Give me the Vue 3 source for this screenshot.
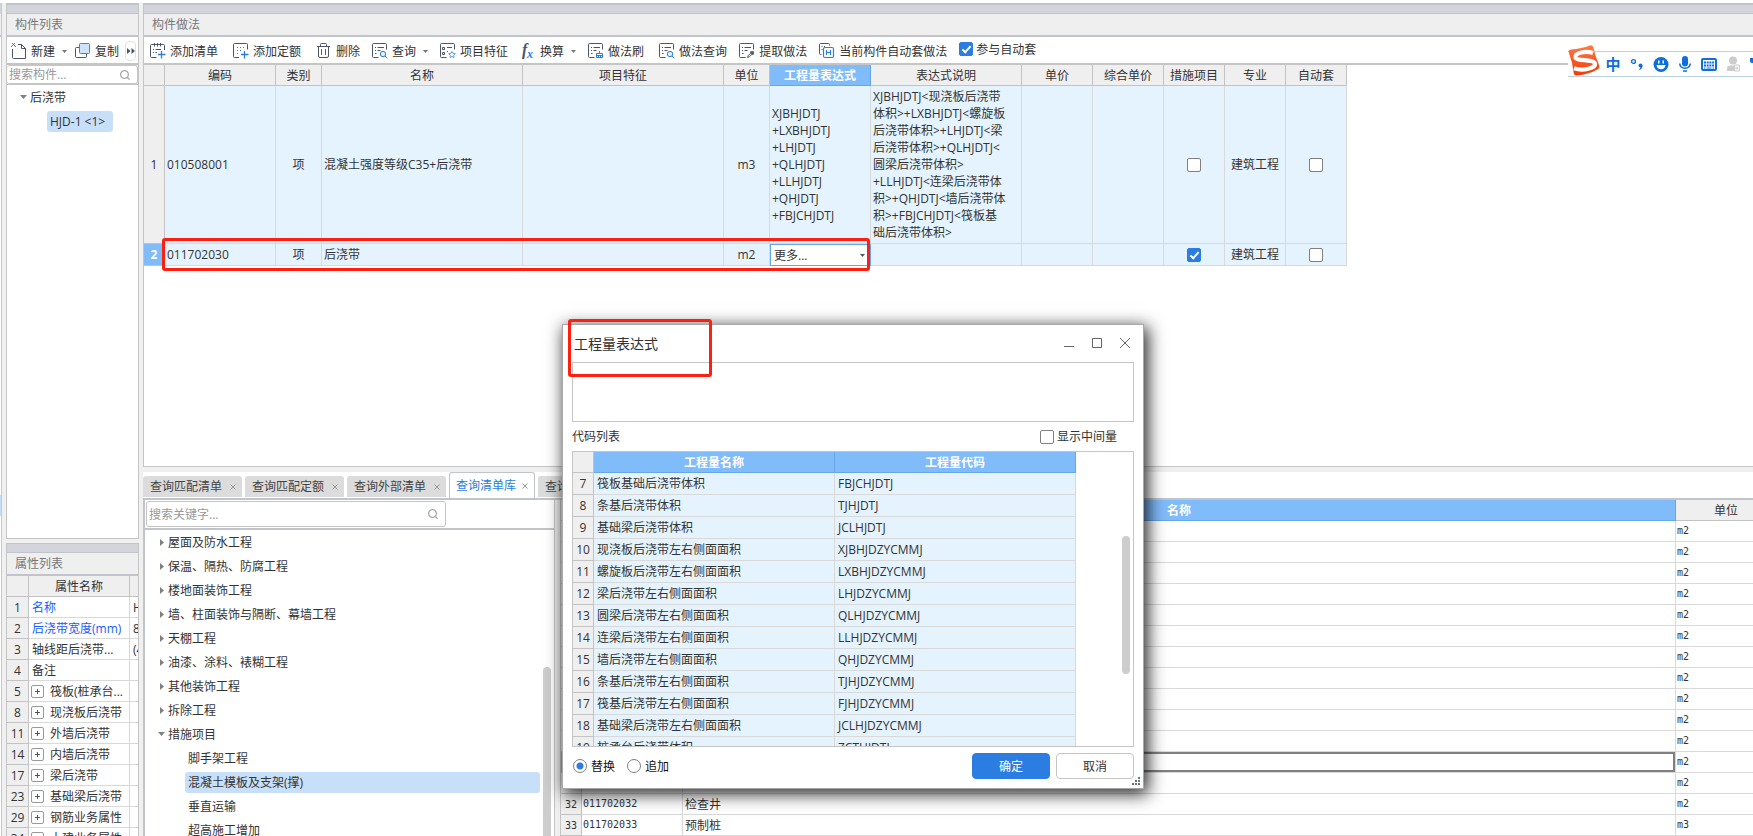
<script setup>
import { ref } from 'vue'

const tools = [
  { label: '添加清单', icon: 'list-add' },
  { label: '添加定额', icon: 'quota-add' },
  { label: '删除', icon: 'trash', tight: true },
  { label: '查询', icon: 'search', caret: true, tight: true },
  { label: '项目特征', icon: 'feature', tight: true },
  { label: '换算', icon: 'fx', caret: true, tight: true },
  { label: '做法刷', icon: 'brush' },
  { label: '做法查询', icon: 'search', tight: true },
  { label: '提取做法', icon: 'extract', tight: true },
  { label: '当前构件自动套做法', icon: 'auto', tight: true },
]

const columns = ['编码', '类别', '名称', '项目特征', '单位', '工程量表达式', '表达式说明', '单价', '综合单价', '措施项目', '专业', '自动套']

const expression = 'XJBHJDTJ\n+LXBHJDTJ\n+LHJDTJ\n+QLHJDTJ\n+LLHJDTJ\n+QHJDTJ\n+FBJCHJDTJ'
const description = 'XJBHJDTJ<现浇板后浇带\n体积>+LXBHJDTJ<螺旋板\n后浇带体积>+LHJDTJ<梁\n后浇带体积>+QLHJDTJ<\n圆梁后浇带体积>\n+LLHJDTJ<连梁后浇带体\n积>+QHJDTJ<墙后浇带体\n积>+FBJCHJDTJ<筏板基\n础后浇带体积>'

const properties = [
  { no: 1, name: '名称', value: 'HJD-1', key: true },
  { no: 2, name: '后浇带宽度(mm)', value: '800', key: true },
  { no: 3, name: '轴线距后浇带...', value: '(400)' },
  { no: 4, name: '备注', value: '' },
  { no: 5, name: '筏板(桩承台...', group: true },
  { no: 8, name: '现浇板后浇带', group: true },
  { no: 11, name: '外墙后浇带', group: true },
  { no: 14, name: '内墙后浇带', group: true },
  { no: 17, name: '梁后浇带', group: true },
  { no: 23, name: '基础梁后浇带', group: true },
  { no: 29, name: '钢筋业务属性', group: true },
  { no: 34, name: '土建业务属性', group: true },
]

const tabs = ['查询匹配清单', '查询匹配定额', '查询外部清单', '查询清单库', '查询定额库']
const activeTab = ref('查询清单库')

const chapters = ['屋面及防水工程', '保温、隔热、防腐工程', '楼地面装饰工程', '墙、柱面装饰与隔断、幕墙工程', '天棚工程', '油漆、涂料、裱糊工程', '其他装饰工程', '拆除工程']
const measures = ['脚手架工程', '混凝土模板及支架(撑)', '垂直运输', '超高施工增加']
const activeMeasure = ref('混凝土模板及支架(撑)')

const named = { 32: ['011702032', '检查井'], 33: ['011702033', '预制桩'] }
const items = Array.from({ length: 15 }, (_, i) => {
  const no = 19 + i
  const [code, name] = named[no] || ['', '']
  return { no, code, name, unit: no === 33 ? 'm3' : 'm2' }
})

const codes = [
  [7, '筏板基础后浇带体积', 'FBJCHJDTJ'],
  [8, '条基后浇带体积', 'TJHJDTJ'],
  [9, '基础梁后浇带体积', 'JCLHJDTJ'],
  [10, '现浇板后浇带左右侧面面积', 'XJBHJDZYCMMJ'],
  [11, '螺旋板后浇带左右侧面面积', 'LXBHJDZYCMMJ'],
  [12, '梁后浇带左右侧面面积', 'LHJDZYCMMJ'],
  [13, '圆梁后浇带左右侧面面积', 'QLHJDZYCMMJ'],
  [14, '连梁后浇带左右侧面面积', 'LLHJDZYCMMJ'],
  [15, '墙后浇带左右侧面面积', 'QHJDZYCMMJ'],
  [16, '条基后浇带左右侧面面积', 'TJHJDZYCMMJ'],
  [17, '筏基后浇带左右侧面面积', 'FJHJDZYCMMJ'],
  [18, '基础梁后浇带左右侧面面积', 'JCLHJDZYCMMJ'],
  [19, '桩承台后浇带体积', 'ZCTHJDTJ'],
]

const joinAuto = ref(true)
const showMiddle = ref(false)
const mode = ref('replace')
const formula = ref('')
const more = ref('more')
</script>

<template>
  <div class="app">
    <div class="edge">
      <div class="edge-top"></div>
      <div class="edge-mark"></div>
    </div>

    <aside class="side">
      <section class="panel list-panel">
        <div class="band"></div>
        <h2 class="panel-title">构件列表</h2>
        <div class="side-tools">
          <button class="tool">
            <svg class="ico" viewBox="0 0 16 16">
              <path d="M1.500 6v8.500a1 1 0 0 0 1 1h12v-10l-4-4H7" fill="none" stroke="#4b5668" />
              <path d="M10.500 1v4.500h4.500" fill="none" stroke="#4b5668" />
              <path d="M0 0h1v1h1v1H1v1H0v1h1V3h1V2h1v1h1v1h1V3H4V2H3V1h1V0H3v1H2V0z" fill="#2b7de1" />
            </svg>
            <span>新建</span>
            <svg class="caret" viewBox="0 0 5 3"><path d="M0 0h5L2.500 3z" /></svg>
          </button>
          <button class="tool">
            <svg class="ico" viewBox="0 0 16 16">
              <path d="M4 4.500H1.500a1 1 0 0 0-1 1v8a1 1 0 0 0 1 1h9a1 1 0 0 0 1-1V11" fill="none" stroke="#4b5668" />
              <rect x="4.500" y=".5" width="10" height="10" rx="1" fill="#cde2fb" stroke="#3a86e0" />
            </svg>
            <span>复制</span>
          </button>
          <button class="overflow" aria-label="更多工具">
            <svg viewBox="0 0 8 6"><path d="M0 0l3.500 3L0 6zM4.500 0L8 3 4.500 6z" fill="#4b5668" /></svg>
          </button>
        </div>
        <div class="side-search">
          <div class="search-box">
            <input type="text" placeholder="搜索构件..." aria-label="搜索构件" />
            <svg class="lens" viewBox="0 0 10 10"><circle cx="4.500" cy="4.500" r="3.900" /><path d="M7.200 7.200L9.500 9.700" /></svg>
          </div>
        </div>
        <ul class="tree">
          <li class="node"><svg class="twist down" viewBox="0 0 7 4"><path d="M0 0h7L3.500 4z" /></svg><span>后浇带</span></li>
          <li class="node leaf"><span class="picked">HJD-1 &lt;1&gt;</span></li>
        </ul>
      </section>

      <section class="panel prop-panel">
        <div class="band"></div>
        <h2 class="panel-title">属性列表</h2>
        <div class="prop-scroll">
          <table class="grid prop-grid">
            <colgroup><col class="w-no" /><col class="w-prop" /><col class="w-value" /></colgroup>
            <thead><tr><th></th><th>属性名称</th><th></th></tr></thead>
            <tbody>
              <tr v-for="p in properties" :key="p.no">
                <th>{{ p.no }}</th>
                <td :class="{ key: p.key }">
                  <span class="prop-name">
                    <button v-if="p.group" class="plus" :aria-label="'展开' + p.name">
                      <svg viewBox="0 0 7 7"><path d="M3.500 1v5M1 3.500h5" stroke="#4b5668" /></svg>
                    </button>
                    {{ p.name }}
                  </span>
                </td>
                <td>{{ p.value }}</td>
              </tr>
            </tbody>
          </table>
        </div>
      </section>
    </aside>

    <main class="main">
      <section class="panel method-panel">
        <div class="band"></div>
        <h2 class="panel-title">构件做法</h2>
        <div class="toolbar">
          <button v-for="t in tools" :key="t.label" class="tool" :class="{ tight: t.tight }">
            <svg class="ico" viewBox="0 0 16 16" fill="none" stroke="#4b5668">
              <template v-if="t.icon === 'list-add'">
                <path d="M6.500 14.500H1.500a1 1 0 0 1-1-1v-11a1 1 0 0 1 1-1h12a1 1 0 0 1 1 1V7" />
                <path d="M4.500 0v3.500M7.500 0v3.500M10.500 0v3.500M3 6.500h1M5.500 6.500h5.500M3 9.500h1M5.500 9.500H7" />
                <path d="M11.500 8v7.500M8 11.500h7.500" stroke="#2b7de1" stroke-width="1.300" />
              </template>
              <template v-else-if="t.icon === 'quota-add'">
                <path d="M6 14.500H1.500a1 1 0 0 1-1-1v-12a1 1 0 0 1 1-1h12a1 1 0 0 1 1 1v5" />
                <path d="M4 4.500h8M4 7.500h6M4 10.500h3" stroke="#2b7de1" stroke-dasharray="1 2" />
                <path d="M11.500 8v7.500M8 11.500h7.500" stroke="#2b7de1" stroke-width="1.300" />
              </template>
              <template v-else-if="t.icon === 'trash'">
                <path d="M1 3.500h13M4.500 3.500v-2a1 1 0 0 1 1-1h4a1 1 0 0 1 1 1v2M2.500 3.500v9.500a1.500 1.500 0 0 0 1.500 1.500h7a1.500 1.500 0 0 0 1.500-1.500v-9.500" />
                <path d="M5.500 6v6M9.500 6v6" stroke="#e5252a" />
              </template>
              <template v-else-if="t.icon === 'fx'">
                <text x="2" y="12" class="fx-f">f</text>
                <text x="7" y="15" class="fx-x">x</text>
              </template>
              <template v-else-if="t.icon === 'auto'">
                <path d="M2.500 11.500H1.500a1 1 0 0 1-1-1v-9a1 1 0 0 1 1-1h8a1 1 0 0 1 1 1V2.500M2.500 3.500h1M2.500 6.500h1M5 3.500h1" />
                <rect x="4.500" y="4.500" width="10" height="10" rx="1.500" stroke="#2b7de1" stroke-width="1.200" />
                <path d="M7.500 7v5M11.500 7v5M7.500 9.500h4" stroke="#2b7de1" stroke-width="1.200" />
              </template>
              <template v-else>
                <path d="M6.500 14.500H1.500a1 1 0 0 1-1-1v-12a1 1 0 0 1 1-1h12a1 1 0 0 1 1 1v5" />
                <template v-if="t.icon === 'feature'">
                  <path d="M2.500 4.500h2v2h-2zM2.500 9.500h2v2h-2zM7 4.500h5M7 8.500h1" />
                  <path d="M12 8.300l1 2.100 2.300.3-1.700 1.600.4 2.300-2-1.100-2 1.100.4-2.300-1.700-1.600 2.300-.3z" stroke="#5b9cec" />
                </template>
                <template v-else>
                  <path d="M3 4.500h1M5.500 4.500H12M3 7.500h1M5.500 7.500H8.500M3 10.500h1.500" />
                  <g v-if="t.icon === 'search'" stroke="#2b7de1"><circle cx="11" cy="11" r="2.700" fill="#e3effc" /><path d="M13 13l2.300 2.300" /></g>
                  <g v-else-if="t.icon === 'brush'" stroke="#2b7de1"><path d="M11.500 8v2.500M8.500 14.500v-4h6v4zM8.500 12.500h6M10.500 12.500v2M12.500 12.500v2" /></g>
                  <g v-else><path d="M8.500 14.500l.8-2 3-3 1.200 1.200-3 3z" /><path d="M11.500 8.500l3 3M13 10l1.700-1.700" stroke-width="1.800" /></g>
                </template>
              </template>
            </svg>
            <span>{{ t.label }}</span>
            <svg v-if="t.caret" class="caret" viewBox="0 0 5 3"><path d="M0 0h5L2.500 3z" /></svg>
          </button>
          <label class="join"><input v-model="joinAuto" type="checkbox" class="check" /><span>参与自动套</span></label>
        </div>

        <div class="method-body">
          <table class="grid method-grid">
            <colgroup>
              <col class="w-no" /><col class="w-code" /><col class="w-kind" /><col class="w-name" /><col class="w-name" /><col class="w-kind" />
              <col class="w-expr" /><col class="w-desc" /><col class="w-price" /><col class="w-price" /><col class="w-flag" /><col class="w-flag" /><col class="w-flag" />
            </colgroup>
            <thead>
              <tr><th></th><th v-for="c in columns" :key="c" :class="{ hot: c === '工程量表达式' }">{{ c }}</th></tr>
            </thead>
            <tbody>
              <tr class="tall">
                <th>1</th>
                <td>010508001</td><td class="mid">项</td><td>混凝土强度等级C35+后浇带</td><td></td><td class="mid">m3</td>
                <td class="lines">{{ expression }}</td><td class="lines">{{ description }}</td><td></td><td></td>
                <td class="mid"><input type="checkbox" class="check" aria-label="措施项目" /></td>
                <td class="mid">建筑工程</td>
                <td class="mid"><input type="checkbox" class="check" aria-label="自动套" /></td>
              </tr>
              <tr class="short">
                <th class="current">2</th>
                <td>011702030</td><td class="mid">项</td><td>后浇带</td><td></td><td class="mid">m2</td>
                <td class="editing">
                  <div class="pick">
                    <select v-model="more" aria-label="工程量表达式"><option value="more">更多...</option></select>
                    <svg class="caret" viewBox="0 0 5 3"><path d="M0 0h5L2.500 3z" /></svg>
                  </div>
                </td>
                <td></td><td></td><td></td>
                <td class="mid"><input type="checkbox" class="check" checked aria-label="措施项目" /></td>
                <td class="mid">建筑工程</td>
                <td class="mid"><input type="checkbox" class="check" aria-label="自动套" /></td>
              </tr>
            </tbody>
          </table>
        </div>
      </section>

      <section class="query">
        <div class="tabs" role="tablist">
          <button v-for="t in tabs" :key="t" class="tab" :class="{ active: t === activeTab }" role="tab" :aria-selected="t === activeTab" @click="activeTab = t">
            <span>{{ t }}</span>
            <svg viewBox="0 0 6 6"><path d="M.5.5l5 5M5.500.5l-5 5" /></svg>
          </button>
        </div>
        <div class="query-body">
          <div class="library">
            <div class="library-search">
              <div class="search-box">
                <input type="text" placeholder="搜索关键字..." aria-label="搜索关键字" />
                <svg class="lens" viewBox="0 0 10 10"><circle cx="4.500" cy="4.500" r="3.900" /><path d="M7.200 7.200L9.500 9.700" /></svg>
              </div>
            </div>
            <div class="library-list">
              <ul class="tree">
                <li v-for="c in chapters" :key="c" class="node"><svg class="twist" viewBox="0 0 4 7"><path d="M0 0l4 3.500L0 7z" /></svg><span>{{ c }}</span></li>
                <li class="node"><svg class="twist down" viewBox="0 0 7 4"><path d="M0 0h7L3.500 4z" /></svg><span>措施项目</span></li>
                <li v-for="m in measures" :key="m" class="node leaf"><span :class="{ picked: m === activeMeasure }">{{ m }}</span></li>
              </ul>
              <div class="track"><div class="thumb"></div></div>
            </div>
          </div>
          <div class="results">
            <table class="grid result-grid">
              <colgroup><col class="w-no" /><col class="w-item" /><col /><col class="w-item" /></colgroup>
              <thead><tr><th></th><th aria-label="编码"></th><th class="hot">名称</th><th>单位</th></tr></thead>
              <tbody>
                <tr v-for="r in items" :key="r.no">
                  <th class="mono" :class="{ current: r.no === 30 }">{{ r.no }}</th>
                  <td class="mono">{{ r.code }}</td>
                  <td :class="{ focus: r.no === 30 }">{{ r.name }}</td>
                  <td class="mono">{{ r.unit }}</td>
                </tr>
              </tbody>
            </table>
          </div>
        </div>
      </section>
    </main>

    <div class="mark mark-row"></div>

    <div class="ime">
      <svg class="ime-logo" viewBox="0 0 32 32">
        <defs><linearGradient id="ime-fill" x1="0" y1="0" x2="0" y2="1"><stop offset="0" stop-color="#ff7a45" /><stop offset="1" stop-color="#f03c06" /></linearGradient></defs>
        <path d="M3 4.500Q14 3.500 22 .5q2.500-.8 3.200 1.500 2 9 6 18.500.8 2.500-1.400 3.700-8.500 5-21 6.300-2.500.2-3-2Q4.500 17 .8 7.500-.1 5 3 4.500z" fill="url(#ime-fill)" />
        <path d="M25 8C18 5.500 6.500 7.500 7.500 12.500c1 4 18 1 19.500 6 1 4.500-12 8-21 4.800" fill="none" stroke="#fff" stroke-width="4.200" />
      </svg>
      <button class="ime-key ime-text">中</button>
      <button class="ime-key" aria-label="标点"><svg viewBox="0 0 16 16"><circle cx="4.500" cy="5.500" r="1.900" fill="none" stroke="#0d6fdc" stroke-width="1.400" /><circle cx="11.500" cy="9.500" r="2" fill="#0d6fdc" /><path d="M13.500 9.500q0 3-3 4.500l-.3-.8q1.400-1 1.300-2.700z" fill="#0d6fdc" /></svg></button>
      <button class="ime-key" aria-label="表情"><svg viewBox="0 0 16 16"><circle cx="8" cy="8.500" r="7.500" fill="#0d6fdc" /><path d="M5 4.500h1.500v3H5zM9.500 4.500H11v3H9.500zM3.500 9h9q-.5 4.200-4.500 4.200T3.500 9z" fill="#fff" /></svg></button>
      <button class="ime-key" aria-label="语音"><svg viewBox="0 0 16 16"><rect x="5" y="0" width="6" height="10.500" rx="3" fill="#0d6fdc" /><path d="M2.700 7.500q.5 4.700 5.300 4.700t5.300-4.700M6 15h4" fill="none" stroke="#0d6fdc" stroke-width="1.600" /></svg></button>
      <button class="ime-key" aria-label="键盘"><svg viewBox="0 0 16 16"><rect x="1" y="3" width="14" height="11" rx="1.200" fill="none" stroke="#0d6fdc" stroke-width="2" /><path d="M3 6.500h10M3 9.500h10" stroke="#0d6fdc" stroke-width="2" stroke-dasharray="2 .7" /><path d="M3 12h1.500M5.500 12h5M11.500 12H13" stroke="#0d6fdc" stroke-width="1.200" /></svg></button>
      <button class="ime-key" aria-label="用户"><svg viewBox="0 0 16 16"><circle cx="8" cy="4.500" r="4" fill="#ccc" /><path d="M2 15v-2.500Q2 9.500 5 9.500h6v5.500z" fill="#ccc" /><path d="M9.500 9h5v6h-5z" fill="#fff" stroke="#ccc" /><path d="M11 10.500v2.500h1.500v-2.500" fill="none" stroke="#ccc" /></svg></button>
      <button class="ime-key" aria-label="工具箱"><svg viewBox="0 0 16 16"><path d="M1 2h6v5H3q-2 0-2-2z" fill="#0d6fdc" /></svg></button>
    </div>

    <section class="dialog" role="dialog" aria-labelledby="dialog-title">
      <header class="dialog-head">
        <h1 id="dialog-title">工程量表达式</h1>
        <div class="window-keys">
          <button aria-label="最小化"><svg viewBox="0 0 12 12"><path d="M1 9.500h10" /></svg></button>
          <button aria-label="最大化"><svg viewBox="0 0 12 12"><path d="M1.500 1.500h9v9h-9z" /></svg></button>
          <button aria-label="关闭"><svg viewBox="0 0 12 12"><path d="M1 1l10 10M11 1L1 11" /></svg></button>
        </div>
      </header>
      <textarea v-model="formula" class="formula" aria-label="工程量表达式"></textarea>
      <div class="dialog-row">
        <span>代码列表</span>
        <label class="option"><input v-model="showMiddle" type="checkbox" class="check" /><span>显示中间量</span></label>
      </div>
      <div class="code-box">
        <table class="grid code-grid">
          <colgroup><col class="w-no" /><col class="w-half" /><col class="w-half" /></colgroup>
          <thead><tr><th></th><th class="hot">工程量名称</th><th class="hot">工程量代码</th></tr></thead>
          <tbody>
            <tr v-for="[no, name, code] in codes" :key="no"><th>{{ no }}</th><td>{{ name }}</td><td>{{ code }}</td></tr>
          </tbody>
        </table>
        <div class="code-track"><div class="code-thumb"></div></div>
      </div>
      <footer class="dialog-foot">
        <label class="option"><input v-model="mode" type="radio" class="radio" value="replace" name="mode" /><span>替换</span></label>
        <label class="option"><input v-model="mode" type="radio" class="radio" value="append" name="mode" /><span>追加</span></label>
        <button class="btn primary">确定</button>
        <button class="btn">取消</button>
      </footer>
      <svg class="grip" viewBox="0 0 8 8"><path d="M6 0h2v2H6zM6 3h2v2H6zM3 3h2v2H3zM6 6h2v2H6zM3 6h2v2H3zM0 6h2v2H0z" fill="#6d7480" /></svg>
      <div class="mark mark-title"></div>
    </section>
  </div>
</template>

<style>
html, body { margin: 0; overflow: hidden; background: #fff; }
</style>

<style scoped>
.app, .app * { box-sizing: border-box; }
.app {
  position: relative;
  display: flex;
  height: 100vh;
  padding-top: 3px;
  overflow: hidden;
  color: #333;
  background: #fff;
  font-family: "Open Sans", "Noto Sans CJK SC", sans-serif;
  font-size: 12px;
  line-height: 17px;
}
button, input, select, textarea { font: inherit; color: inherit; }
button { padding: 0; border: 0; background: none; }
ul, h1, h2 { margin: 0; padding: 0; font-size: 12px; font-weight: 400; list-style: none; }
svg { display: block; flex: none; }

.edge { width: 2px; background: #fff; border-right: 1px solid #c8c8c8; }
.edge-top { height: 34px; background: #efefef; border-top: 11px solid #d4d5dc; border-bottom: 2px solid #c1c5cb; }
.edge-mark { height: 21px; margin-top: 458px; background: #c8dffa; }

.side { display: flex; flex-direction: column; gap: 4px; width: 141px; padding: 0 4px; background: #f0f0f0; flex: none; }
.panel { display: flex; flex-direction: column; min-height: 0; background: #fff; border-left: 1px solid #c5c5c5; overflow: hidden; }
.side .panel { border-right: 1px solid #c5c5c5; }
.list-panel { flex: 1; border-bottom: 1px solid #c5c5c5; }
.prop-panel { height: 293px; flex: none; }
.prop-panel .band { height: 10px; border-top-width: 1px; }
.band { height: 11px; flex: none; background: #d4d5dc; border-top: 2px solid #c1c5cb; border-bottom: 1px solid #c1c5cb; }
.panel-title { height: 23px; flex: none; padding-left: 8px; line-height: 22px; color: #777; background: #efefef; border-bottom: 2px solid #c1c5cb; }

.side-tools, .toolbar { display: flex; align-items: center; height: 28px; flex: none; padding-top: 2px; border-bottom: 2px solid #c5c5c5; }
.side-tools { padding-left: 4px; gap: 8px; }
.toolbar { padding-left: 6px; }
.tool { display: flex; align-items: center; gap: 4px; white-space: nowrap; }
.toolbar .tool { margin-right: 15px; }
.toolbar .tool.tight { margin-right: 12px; }
.ico { width: 16px; height: 16px; }
.caret { width: 5px; height: 3px; margin-left: 3px; fill: #777; }
.fx-f { font: italic 700 16px "Liberation Serif", serif; fill: #4b5668; stroke: none; }
.fx-x { font: italic 700 12px "Liberation Serif", serif; fill: #2b7de1; stroke: none; }
.overflow { display: flex; align-items: center; justify-content: center; width: 11px; height: 20px; margin-left: -2px; border: 1px solid #e2e2e2; border-radius: 4px; }
.overflow svg { width: 8px; height: 6px; }
.join { display: flex; align-items: center; gap: 3px; padding-bottom: 4px; white-space: nowrap; }

.search-box { display: flex; align-items: center; border: 1px solid #c5c5c5; border-radius: 3px; background: #fff; }
.search-box input { flex: 1; min-width: 0; height: 17px; padding: 0 0 0 2px; border: 0; outline: 0; background: none; }
.search-box input::placeholder { color: #999; opacity: 1; }
.lens { width: 10px; height: 10px; margin-right: 7px; fill: none; stroke: #aaa; stroke-width: 1.3; }
.side-search { flex: none; border-bottom: 1px solid #c5c5c5; }
.side-search .search-box { height: 19px; border-left: 0; }

.node { display: flex; align-items: center; height: 24px; }
.twist { width: 4px; height: 7px; fill: #808080; }
.twist.down { width: 7px; height: 4px; }
.list-panel .node { padding-left: 13px; gap: 3px; }
.list-panel .leaf { padding-left: 40px; }
.picked { padding: 2px 3px; background: #c8dffa; border-radius: 3px; }
.list-panel .picked { padding: 2px 8px 2px 3px; }

.grid { table-layout: fixed; border-collapse: separate; border-spacing: 0; width: 100%; }
.grid th, .grid td { height: 21px; padding: 0 2px; border-right: 1px solid #d9d9d9; border-bottom: 1px solid #d9d9d9; overflow: hidden; white-space: nowrap; text-align: left; vertical-align: middle; font-weight: 400; }
.grid th { padding: 0; text-align: center; background: #efefef; border-color: #c3c3c3; }
.grid th.hot { color: #fff; font-weight: 700; background: #80bbfa; border-color: #65a7ea; }
.grid th.current { color: #fff; font-weight: 700; background: #80bbfa; }
.grid .mid { text-align: center; }
.w-no { width: 21px; }
.w-code { width: 111px; }
.w-kind { width: 46px; }
.w-name { width: 201px; }
.w-expr, .w-item { width: 101px; }
.w-desc { width: 151px; }
.w-price { width: 71px; }
.w-flag { width: 61px; }
.w-half { width: 241px; }
.w-prop { width: 101px; }
.w-value { width: 100px; }

.prop-scroll { overflow: hidden; }
.prop-grid { width: 223px; }
.prop-grid .w-no { width: 22px; }
.prop-grid td:nth-child(2) { padding-left: 3px; }
.prop-grid td:nth-child(3) { padding-left: 3px; }
.prop-name { display: flex; align-items: center; gap: 6px; }
.key { color: #1a5cff; }
.plus { display: flex; align-items: center; justify-content: center; width: 13px; height: 13px; margin-left: -1px; border: 1px solid #999; border-radius: 2px; flex: none; }
.plus svg { width: 7px; height: 7px; }

.main { display: flex; flex-direction: column; flex: 1; min-width: 0; }
.method-panel { flex: 1; border-bottom: 1px solid #c5c5c5; }
.method-body { flex: 1; min-height: 0; overflow: hidden; }
.method-grid { width: 1203px; }
.method-grid td { background: #e5f3ff; }
.method-grid .tall > * { height: 158px; }
.method-grid .short > * { height: 22px; }
.method-grid .lines { white-space: pre; }
.method-grid .editing { padding: 0; background: #fff; border-color: #65a7ea; }
.method-grid .check { display: block; margin: 0 auto; }
.pick { display: flex; align-items: center; height: 21px; padding-right: 5px; border: 1px solid #65a7ea; border-width: 1px 0 0 1px; }
.pick select { flex: 1; min-width: 0; padding: 0 0 0 3px; border: 0; outline: 0; background: none; appearance: none; }
.pick .caret { fill: #4b5668; }

.check { appearance: none; display: inline-block; width: 14px; height: 14px; margin: 0; border: 1px solid #808080; border-radius: 2px; background: #fff; vertical-align: middle; flex: none; }
.check:checked { border-color: #2b7de1; background: #2b7de1; position: relative; }
.check:checked::after { content: ""; position: absolute; left: 4px; top: 1px; width: 3px; height: 7px; border: solid #fff; border-width: 0 2px 2px 0; transform: rotate(42deg); }

.query { display: flex; flex-direction: column; height: 369px; flex: none; border-top: 5px solid #efefef; background: #fff; }
.tabs { display: flex; align-items: flex-end; gap: 3px; height: 28px; flex: none; border-bottom: 2px solid #c1c5cb; overflow: hidden; }
.tab { display: flex; align-items: center; gap: 8px; height: 21px; margin-bottom: 1px; padding: 0 6px 0 7px; background: #dcdcdc; border-radius: 3px 3px 0 0; color: #444; white-space: nowrap; flex: none; }
.tab svg { width: 6px; height: 6px; stroke: #999; }
.tab.active { height: 26px; margin-bottom: 0; gap: 6px; padding: 0 6px; color: #2b7de1; background: #fff; border: 1px solid #c1c5cb; border-bottom: 0; }
.query-body { display: flex; flex: 1; min-height: 0; }
.library { display: flex; flex-direction: column; width: 412px; flex: none; border-left: 2px solid #c1c5cb; border-right: 1px solid #c5c5c5; }
.library-search { padding: 1px; border-bottom: 2px solid #c1c5cb; flex: none; }
.library-search .search-box { width: 300px; height: 26px; }
.library-list { display: flex; flex: 1; min-height: 0; }
.library-list .tree { flex: 1; overflow: hidden; }
.library .node { padding-left: 15px; gap: 4px; }
.library .twist.down { margin: 0 -1px 0 -2px; }
.library .leaf { padding-left: 40px; }
.library .leaf span { flex: 1; padding: 2px 3px; }
.track { width: 14px; padding: 137px 3px 0; }
.thumb { height: 100%; background: #cdcdcd; border-radius: 4px 4px 0 0; }
.results { flex: 1; min-width: 0; margin-left: 5px; border-left: 1px solid #c5c5c5; box-shadow: -5px 0 #efefef; overflow: hidden; }
.result-grid { width: calc(100% + 24px); }
.grid .mono { font-family: "DejaVu Sans Mono", monospace; font-size: 10px; }
.result-grid td { padding: 0 0 0 2px; }
.result-grid td.mono { padding: 0 0 2px 1px; }
.grid .focus { box-shadow: inset 0 0 0 2px #808080; }

.mark { position: absolute; border: 3px solid #ff1f10; border-radius: 3px; pointer-events: none; }
.mark-row { left: 162px; top: 238px; width: 708px; height: 33px; }
.mark-title { left: 5px; top: -6px; width: 144px; height: 58px; }

.ime { position: absolute; top: 51px; right: 0; display: flex; align-items: center; width: 185px; height: 26px; background: #fff; border: 1px solid #b9d0e8; border-width: 1px 0; }
.ime-logo { width: 32px; height: 32px; margin: -6px 1px 0 0; }
.ime-key { display: flex; align-items: center; justify-content: center; width: 24px; height: 24px; flex: none; }
.ime-key svg { width: 16px; height: 16px; }
.ime-text { color: #0d6fdc; font-size: 15px; font-weight: 700; }

.dialog { position: absolute; left: 562px; top: 324px; display: flex; flex-direction: column; width: 582px; padding: 0 9px 9px; background: #fff; border: 1px solid #a8a8a8; box-shadow: 3px 4px 16px 1px rgba(0, 0, 0, .85); }
.dialog-head { display: flex; align-items: center; justify-content: space-between; height: 37px; padding-left: 2px; }
.dialog-head h1 { font-size: 14px; line-height: 20px; }
.window-keys { display: flex; gap: 16px; padding: 0 3px 2px 0; }
.window-keys svg { width: 12px; height: 12px; fill: none; stroke: #666; }
.formula { display: block; width: 100%; height: 60px; padding: 4px; border: 1px solid #c5c5c5; outline: 0; resize: none; }
.dialog-row { display: flex; align-items: center; justify-content: space-between; height: 29px; padding-right: 17px; }
.option { display: flex; align-items: center; gap: 3px; }
.code-box { display: flex; justify-content: space-between; height: 296px; border: 1px solid #c5c5c5; overflow: hidden; }
.code-grid { width: 503px; flex: none; align-self: flex-start; }
.code-grid tbody th, .code-grid td { height: 22px; }
.code-grid td { padding: 0 3px; background: #e5f3ff; }
.code-track { padding: 84px 3px 72px 0; }
.code-thumb { width: 8px; height: 100%; background: #cdcdcd; border-radius: 4px; }
.dialog-foot { display: flex; align-items: center; gap: 6px; padding: 6px 0 0 1px; color: #111; }
.dialog-foot .option { margin-right: 6px; gap: 4px; }
.radio { appearance: none; width: 14px; height: 14px; margin: 0; border: 1px solid #808080; border-radius: 50%; background: #fff; }
.radio:checked { background: radial-gradient(circle, #2b7de1 3px, #fff 4px); }
.btn { width: 78px; height: 26px; border: 1px solid #c5c5c5; border-radius: 4px; background: #fff; color: #333; }
.btn.primary { margin-left: auto; color: #fff; background: #2b7de1; border-color: #2b7de1; }
.grip { position: absolute; right: 3px; bottom: 3px; width: 8px; height: 8px; }
</style>
